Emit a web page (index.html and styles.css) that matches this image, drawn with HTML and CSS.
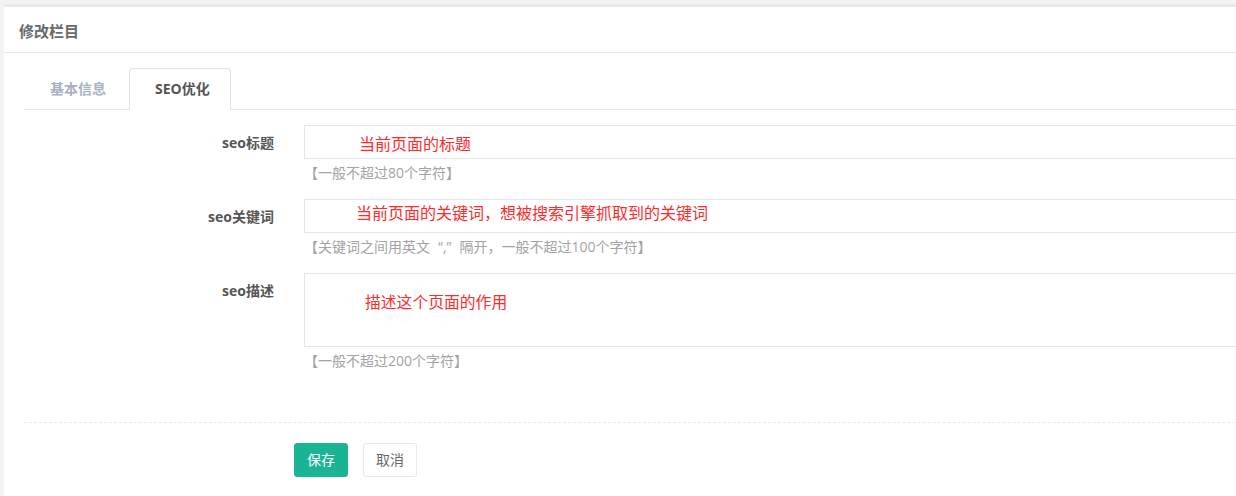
FILE: index.html
```html
<!DOCTYPE html>
<html lang="zh-CN">
<head>
<meta charset="utf-8">
<title>修改栏目</title>
<link rel="stylesheet" href="styles.css">
</head>
<body>
<div class="page">
  <div class="ibox">
    <div class="ibox-title"><h5>修改栏目</h5></div>
    <div class="ibox-content">
      <ul class="tabs">
        <li class="tab">基本信息</li>
        <li class="tab active">SEO优化</li>
      </ul>
      <form class="form">
        <div class="row">
          <label class="label">seo标题</label>
          <div class="field">
            <div class="input input-title"><span class="val">当前页面的标题</span></div>
            <div class="help">【一般不超过80个字符】</div>
          </div>
        </div>
        <div class="row">
          <label class="label">seo关键词</label>
          <div class="field">
            <div class="input input-kw"><span class="val">当前页面的关键词，想被搜索引擎抓取到的关键词</span></div>
            <div class="help">【关键词之间用英文<span class="q">“,”</span>隔开，一般不超过100个字符】</div>
          </div>
        </div>
        <div class="row">
          <label class="label">seo描述</label>
          <div class="field">
            <div class="input textarea"><span class="val">描述这个页面的作用</span></div>
            <div class="help">【一般不超过200个字符】</div>
          </div>
        </div>
        <div class="divider"></div>
        <div class="actions">
          <button type="button" class="btn btn-primary">保存</button>
          <button type="button" class="btn btn-white">取消</button>
        </div>
      </form>
    </div>
  </div>
</div>
</body>
</html>
```
FILE: styles.css
```css
* { box-sizing: border-box; }
html, body { margin: 0; padding: 0; }
body {
  background: #f3f3f4;
  font-family: "Open Sans", "Noto Sans CJK SC", sans-serif;
  color: #676a6c;
  overflow: hidden;
  width: 1236px;
  height: 496px;
}
.page {
  padding: 4px 0 0 4px;
  width: 1400px;
  height: 496px;
  overflow: hidden;
}
.ibox {
  background: #fff;
  border-top: 3px solid #e7eaec;
  height: 520px;
}
.ibox-title {
  height: 46px;
  border-bottom: 1px solid #e7eaec;
  padding-left: 15px;
  display: flex;
  align-items: center;
}
.ibox-title h5 {
  margin: 0;
  font-size: 15px;
  font-weight: bold;
  color: #676a6c;
  line-height: 20px;
  padding-top: 2px;
}
.ibox-content {
  padding: 15px 20px 0 20px;
}
.tabs {
  list-style: none;
  margin: 0;
  padding: 0;
  display: flex;
  border-bottom: 1px solid #e2e2e2;
}
.tab {
  padding: 10px 20px 10px 25px;
  font-size: 14px;
  font-weight: bold;
  line-height: 20px;
  color: #a7b1c2;
  border: 1px solid transparent;
  border-radius: 4px 4px 0 0;
  margin-right: 2px;
  margin-bottom: -1px;
}
.tab.active {
  color: #555;
  background: #fff;
  border-color: #e2e2e2 #e2e2e2 #fff;
}
.form {
  padding-top: 15px;
}
.row {
  display: grid;
  grid-template-columns: 250px 1fr;
  column-gap: 30px;
  margin-bottom: 17px;
}
.label {
  text-align: right;
  font-size: 14px;
  font-weight: bold;
  color: #555;
  line-height: 20px;
  padding-top: 8px;
}
.input {
  height: 34px;
  border: 1px solid #e5e6e7;
  background: #fff;
}
.textarea {
  height: 74px;
}
.val {
  color: #ff2a2a;
  line-height: 20px;
  display: block;
  white-space: nowrap;
}
.input-title .val { padding: 8px 0 0 54px; font-size: 16px; }
.input-kw .val { padding: 3px 0 0 51px; font-size: 16px; }
.textarea .val { padding: 18px 0 0 60px; font-size: 15.8px; }
.help {
  margin-top: 5px;
  font-size: 14px;
  line-height: 18px;
  color: #a3a3a3;
}
.q {
  padding: 0 8px;
}
.divider {
  border-top: 1px dashed #e7eaec;
  margin-top: 52px;
  margin-bottom: 20px;
}
.actions {
  padding-left: 270px;
  display: flex;
  gap: 15px;
}
.btn {
  height: 34px;
  padding: 0 12px;
  font-size: 14px;
  font-family: "Open Sans", "Noto Sans CJK SC", sans-serif;
  border-radius: 3px;
  border: 1px solid;
  line-height: 20px;
  cursor: pointer;
}
.btn-primary {
  background: #1ab394;
  border-color: #1ab394;
  color: #fff;
}
.btn-white {
  background: #fff;
  border-color: #e7eaec;
  color: #676a6c;
}
```
